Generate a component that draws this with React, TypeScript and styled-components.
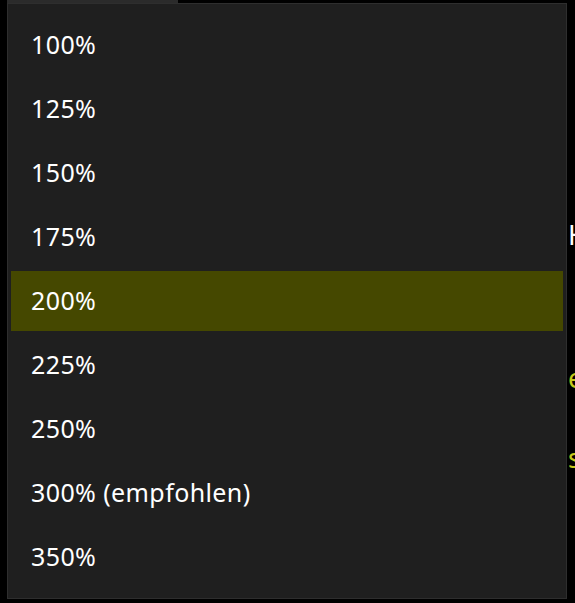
import styled, { createGlobalStyle } from 'styled-components';

const GlobalStyle = createGlobalStyle`
  html, body {
    margin: 0;
    padding: 0;
    background: #000;
    overflow: hidden;
  }
  body {
    font-family: "Noto Sans", "Open Sans", sans-serif;
  }
`;

const options: string[] = [
  '100%',
  '125%',
  '150%',
  '175%',
  '200%',
  '225%',
  '250%',
  '300% (empfohlen)',
  '350%',
];

const selectedIndex = 4;

const App = () => {
  return (
    <Page>
      <GlobalStyle />
      <Backdrop>
        <LeftColumn>
          <ComboBox>Zoom 300 %</ComboBox>
        </LeftColumn>
        <RightColumn>
          <BackText>Hintergrund</BackText>
          <BackLink>erweiterte Einstellungen</BackLink>
          <BackLink>sonstige Optionen</BackLink>
        </RightColumn>
      </Backdrop>
      <Popup>
        {options.map((option, index) => (
          <Item key={option} selected={index === selectedIndex}>
            {option}
          </Item>
        ))}
      </Popup>
    </Page>
  );
};
export default App;

const Page = styled.div`
  position: relative;
  width: 575px;
  height: 603px;
  overflow: hidden;
  background: #000;
`;

const Backdrop = styled.div`
  display: flex;
  height: 100%;
`;

const LeftColumn = styled.div`
  width: 561px;
  padding-left: 7px;
  flex-shrink: 0;
`;

const ComboBox = styled.div`
  width: 171px;
  height: 34px;
  margin-top: -30px;
  box-sizing: border-box;
  background: #2b2b2b;
  color: #8a8a8a;
  font-size: 26px;
  line-height: 28px;
  padding-left: 22px;
  white-space: nowrap;
  overflow: hidden;
`;

const RightColumn = styled.div`
  display: flex;
  flex-direction: column;
  padding-top: 218px;
  white-space: nowrap;
`;

const BackText = styled.div`
  color: #fff;
  font-size: 27px;
  line-height: 34px;
  margin-bottom: 109px;
`;

const BackLink = styled.div`
  color: #c6c91c;
  font-size: 27px;
  line-height: 34px;
  margin-bottom: 46px;
`;

const Popup = styled.div`
  position: absolute;
  left: 7px;
  top: 3px;
  width: 560px;
  height: 596px;
  box-sizing: border-box;
  background: #1f1f1f;
  border: 1px solid #2e2e2e;
  padding: 11px 3px;
  display: flex;
  flex-direction: column;
  gap: 4px;
`;

const Item = styled.div<{ selected?: boolean }>`
  height: 60px;
  box-sizing: border-box;
  padding-bottom: 3px;
  flex-shrink: 0;
  display: flex;
  align-items: center;
  padding-left: 20px;
  font-size: 25px;
  letter-spacing: 0.4px;
  color: #fff;
  background: ${props => (props.selected ? '#454800' : 'transparent')};
`;
